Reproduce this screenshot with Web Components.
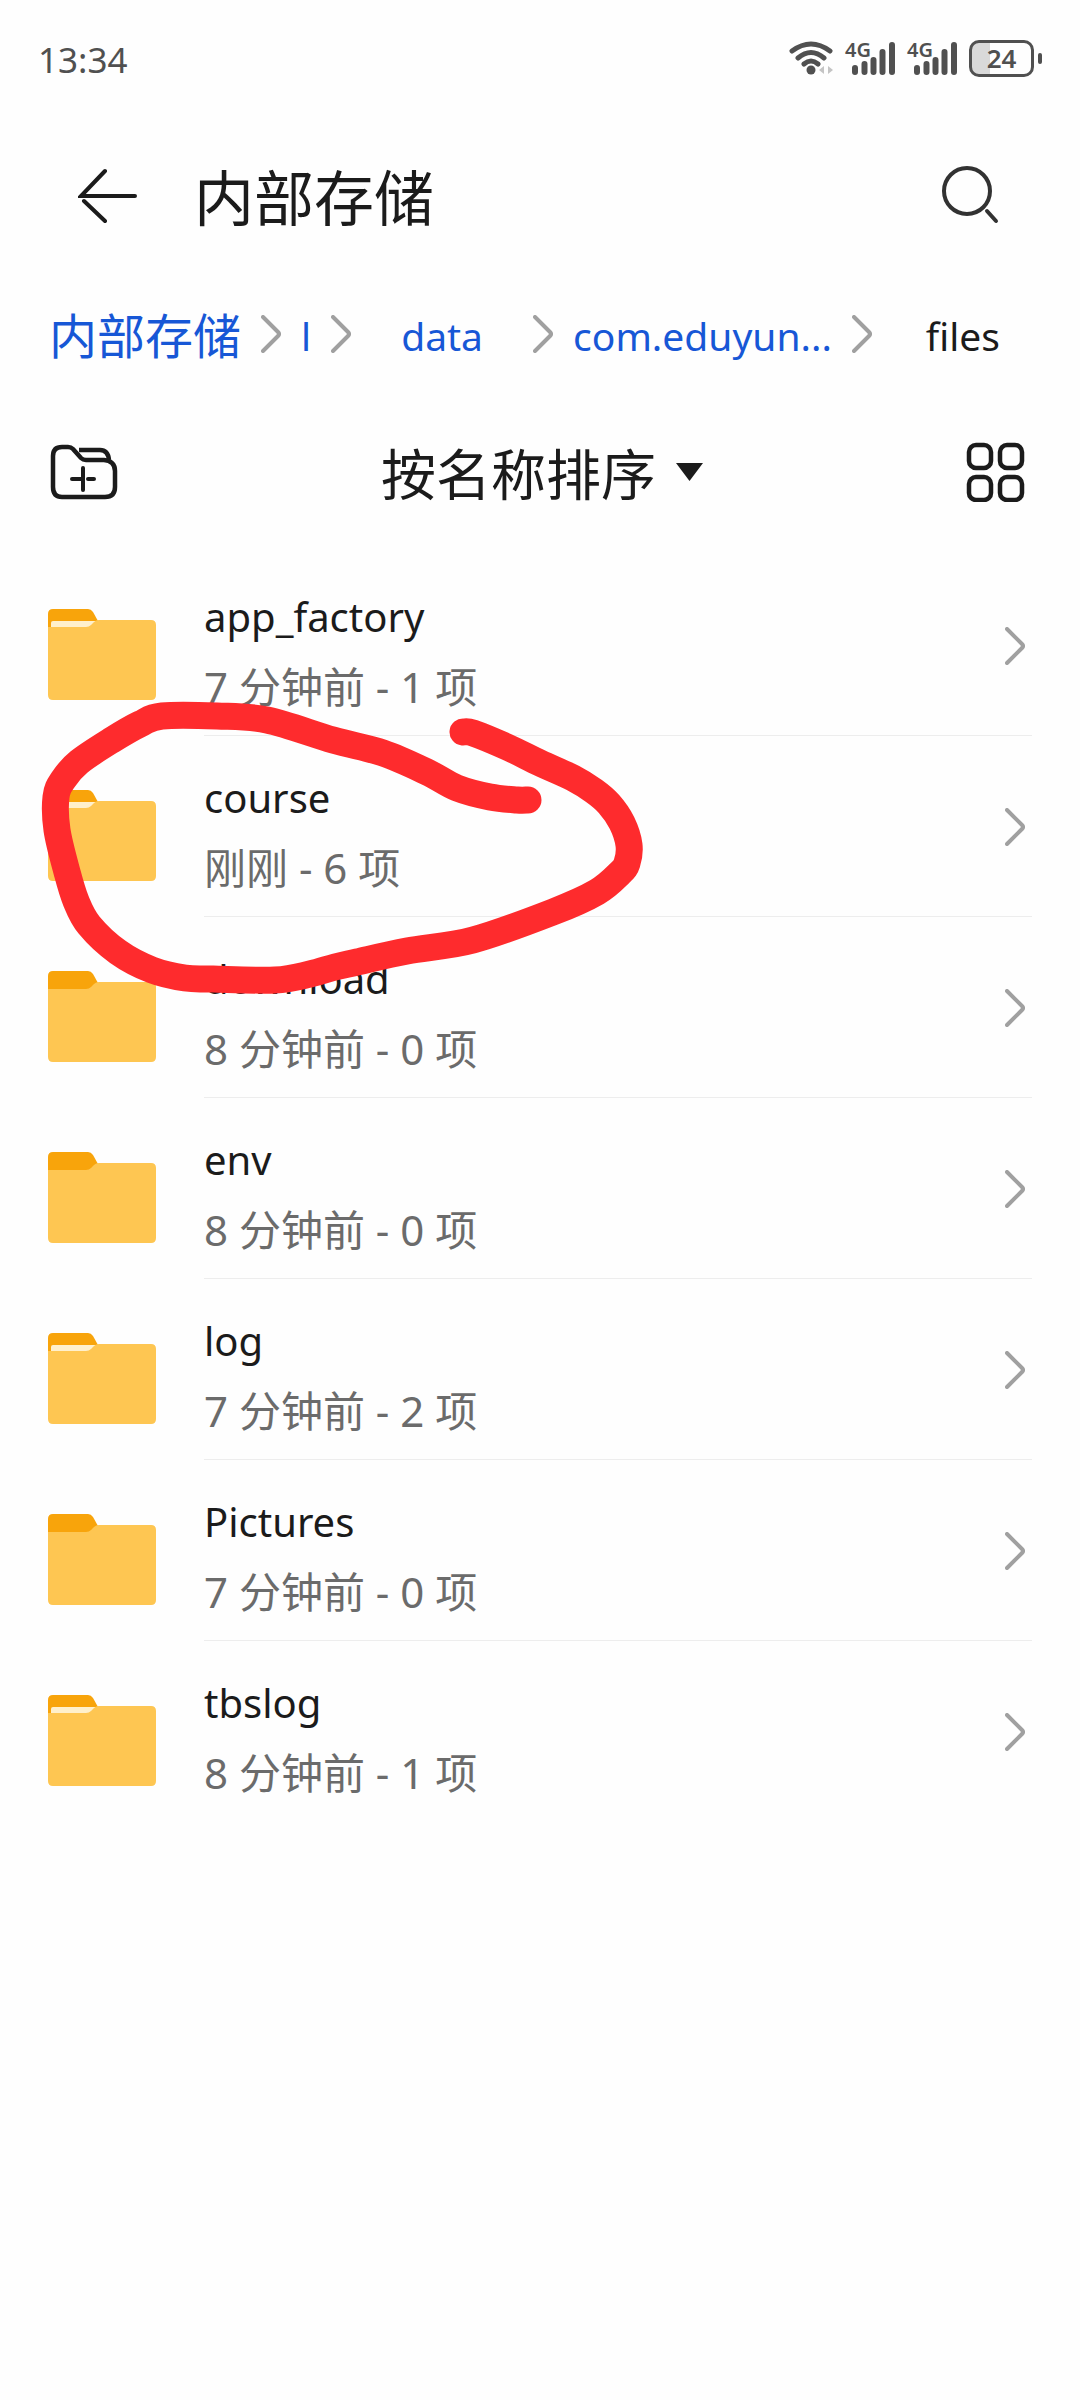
<!DOCTYPE html>
<html lang="zh-CN">
<head>
<meta charset="utf-8">
<meta name="viewport" content="width=device-width, initial-scale=1">
<title>内部存储</title>
<style>
html, body { margin: 0; }
body { background: #fefefe; color: #1b1b1b; font-family: "Noto Sans", "Noto Sans CJK SC", sans-serif; }
</style>
</head>
<body>
<file-manager></file-manager>
<script>
const define = (name, html, setup) => {
  const tpl = document.createElement('template');
  tpl.innerHTML = `<style>
    *{box-sizing:border-box}
    button,a{font:inherit;color:inherit;background:none;border:0;padding:0;margin:0;text-decoration:none;cursor:pointer}
    svg{display:block;flex:none}
  </style>` + html;
  customElements.define(name, class extends HTMLElement {
    constructor() {
      super();
      this.attachShadow({ mode: 'open' }).append(tpl.content.cloneNode(true));
    }
    connectedCallback() { if (setup) setup(this, this.shadowRoot); }
  });
};

define('chevron-icon', `
<style>:host{display:block;flex:none;color:#a0a0a0}</style>
<svg width="20" height="38" viewBox="0 0 20 38" fill="none" stroke="currentColor" stroke-width="4" stroke-linecap="round" stroke-linejoin="round" aria-hidden="true"><path d="M2 2l15 15q2 2 0 4L2 36"/></svg>`);

define('signal-icon', `
<style>
:host{display:block;position:relative;width:50px;height:34px}
span{position:absolute;left:0;top:0;font-size:20px;line-height:18px;font-weight:600}
</style>
<span>4G</span>
<svg width="50" height="34" viewBox="0 0 50 34" stroke="currentColor" stroke-width="6" stroke-linecap="round" aria-hidden="true"><path d="M10 27v4M19.500 23v8M28.500 19v12M37.500 11v20M47 4v27"/></svg>`);

define('battery-icon', `
<style>
:host{display:flex;align-items:center;gap:4px}
.body{width:65px;height:37px;border:3px solid currentColor;border-radius:10px;background:linear-gradient(90deg,#d9d9d9 18px,transparent 18px);display:flex;align-items:center;justify-content:center;font-size:26px;line-height:30px;font-weight:600}
.cap{width:4px;height:11px;border-radius:2px;background:currentColor}
</style>
<div class="body"><slot></slot></div><div class="cap"></div>`);

define('status-bar', `
<style>
:host{display:flex;align-items:center;justify-content:space-between;height:116px;padding:0 38px 0 38px;color:#505050}
time{font-size:35px;line-height:40px;padding-top:4px}
.right{display:flex;align-items:center;gap:12px}
</style>
<time>13:34</time>
<div class="right">
<svg width="44" height="34" viewBox="0 0 44 34" fill="none" stroke="currentColor" stroke-width="5" stroke-linecap="round" aria-hidden="true"><path d="M3 10Q22-4 41 10M9 17Q22 6 35 17M15 23Q22 17 29 23"/><circle cx="22" cy="29" r="4.500" fill="currentColor" stroke="none"/><path d="M35 25v8l-5-4zM39 25v8l5-4z" fill="#c4c4c4" stroke="none"/></svg>
<signal-icon></signal-icon><signal-icon></signal-icon><battery-icon>24</battery-icon>
</div>`);

define('title-bar', `
<style>
:host{display:flex;align-items:center;height:160px;padding:0 80px 0 78px}
h1{flex:1;margin:0 0 0 56px;padding-top:4px;font-size:60px;line-height:72px;font-weight:400}
.find{color:#323232}
</style>
<button aria-label="返回"><svg width="60" height="56" viewBox="0 0 60 56" fill="none" stroke="currentColor" stroke-width="4" stroke-linecap="round"><path d="M27 3L3 28H57M6 33L27 53"/></svg></button>
<h1><slot></slot></h1>
<button class="find" aria-label="搜索"><svg width="60" height="64" viewBox="0 0 60 64" fill="none" stroke="currentColor" stroke-width="4"><circle cx="27" cy="27" r="23"/><path d="M47 47L56 57" stroke-linecap="round"/></svg></button>`);

define('crumb-trail', `
<style>
:host{display:block}
nav{display:flex;align-items:center;gap:20px;height:116px;padding-left:49px;font-size:39px;line-height:56px;white-space:nowrap}
a,span{padding-top:4px}
a{color:#1757d6}
.root{font-size:48px}
.wide{min-width:142px;text-align:center}
</style>
<nav aria-label="路径">
<a class="root" href="#root">内部存储</a><chevron-icon></chevron-icon>
<a href="#l">l</a><chevron-icon></chevron-icon>
<a class="wide" href="#data">data</a><chevron-icon></chevron-icon>
<a href="#com">com.eduyun...</a><chevron-icon></chevron-icon>
<span class="wide" aria-current="page">files</span>
</nav>`);

define('sort-bar', `
<style>
:host{display:flex;align-items:center;justify-content:space-between;height:160px;margin-bottom:3px;padding:0 54px 0 50px}
.sort{display:flex;align-items:center;gap:20px;font-size:55px;line-height:72px}
.sort span{padding-top:4px}
</style>
<button aria-label="新建文件夹"><svg width="68" height="56" viewBox="0 0 68 56" fill="none" stroke="currentColor" stroke-width="4.500"><path d="M3 12Q3 3 12 3H18Q21 3 23 5L31 14Q33 16 36 16H54Q65 17 65 27V43Q65 53 55 53H12Q3 53 3 43Z"/><path d="M29 6H50Q58 6 59 16"/><path d="M33 24V46M22 35H32M38 35H44" stroke-width="4" stroke-linecap="round"/></svg></button>
<button class="sort"><span>按名称排序</span><svg width="27" height="18" viewBox="0 0 27 18" fill="currentColor" aria-hidden="true"><path d="M0 0H27L13.500 18Z"/></svg></button>
<button aria-label="网格视图"><svg width="60" height="60" viewBox="0 0 60 60" fill="none" stroke="currentColor" stroke-width="4.500"><rect x="3" y="3" width="22" height="23" rx="7"/><rect x="34" y="3" width="22" height="23" rx="7"/><rect x="3" y="35" width="22" height="23" rx="7"/><rect x="34" y="35" width="22" height="23" rx="7"/></svg></button>`);

define('folder-icon', `
<style>:host{display:block}:host([empty]) .paper{display:none}</style>
<svg width="108" height="91" viewBox="0 0 108 91" aria-hidden="true">
<path d="M0 30V5Q0 0 5 0H40Q43 0 45 3L50 12V30Z" fill="#f8a40b"/>
<path class="paper" d="M3 14Q3 12 5 12H50V24H3Z" fill="#fff0cc"/>
<path d="M0 18H38Q41 18 43 16L46 13Q48 11 51 11H103Q108 11 108 16V86Q108 91 103 91H5Q0 91 0 86Z" fill="#fec652"/>
</svg>`);

define('file-row', `
<style>
:host{display:block}
a{display:flex;padding-left:48px}
folder-icon{margin:54px 48px 0 0}
.main{flex:1;display:flex;justify-content:space-between;height:181px;margin-right:48px;padding:34px 7px 0 0;border-bottom:1px solid #ededed}
:host(:last-child) .main{border-color:transparent}
.name{font-size:40px;line-height:56px;margin-bottom:14px}
.info{font-size:42px;line-height:56px;color:#6b6b6b}
chevron-icon{margin-top:38px}
</style>
<a href="#"><folder-icon></folder-icon><div class="main"><div><div class="name"><slot></slot></div><div class="info"></div></div><chevron-icon></chevron-icon></div></a>`,
(el, root) => {
  root.querySelector('.info').textContent = el.getAttribute('info');
  root.querySelector('a').href = '#' + el.textContent;
  root.querySelector('folder-icon').toggleAttribute('empty', el.getAttribute('info').includes('- 0 '));
});

define('pen-mark', `
<style>:host{display:block;pointer-events:none}</style>
<svg width="620" height="300" viewBox="30 700 620 300" aria-hidden="true"><path fill="none" stroke="#fe2b2d" stroke-width="27" stroke-linecap="round" stroke-linejoin="round"/></svg>`,
(el, root) => {
  const p = [[463,732],[473,733],[507,747],[540,763],[573,778],[594,791],[609,804],[622,823],[629,845],[627,863],[620,873],[597,892],[553,912],[473,940],[407,951],[357,962],[335,967],[310,974],[275,980],[213,979],[185,978],[152,970],[118,952],[89,925],[76,901],[67,872],[57,830],[56,797],[63,780],[79,762],[112,740],[140,724],[162,716],[217,716],[267,720],[333,740],[383,753],[427,772],[457,788],[490,797],[517,800],[528,800]];
  let d = 'M' + p[0];
  for (let i = 0; i < p.length - 1; i++) {
    const a = p[i - 1] || p[i], b = p[i], c = p[i + 1], e = p[i + 2] || c;
    d += `C${b[0] + (c[0] - a[0]) / 6} ${b[1] + (c[1] - a[1]) / 6} ${c[0] - (e[0] - b[0]) / 6} ${c[1] - (e[1] - b[1]) / 6} ${c}`;
  }
  root.querySelector('path').setAttribute('d', d);
});

define('file-manager', `
<style>
:host{display:block}
main{position:relative}
pen-mark{position:absolute;left:30px;top:145px}
</style>
<status-bar></status-bar>
<title-bar>内部存储</title-bar>
<crumb-trail></crumb-trail>
<sort-bar></sort-bar>
<main>
<div>
<file-row info="7 分钟前 - 1 项">app_factory</file-row>
<file-row info="刚刚 - 6 项">course</file-row>
<file-row info="8 分钟前 - 0 项">download</file-row>
<file-row info="8 分钟前 - 0 项">env</file-row>
<file-row info="7 分钟前 - 2 项">log</file-row>
<file-row info="7 分钟前 - 0 项">Pictures</file-row>
<file-row info="8 分钟前 - 1 项">tbslog</file-row>
</div>
<pen-mark></pen-mark>
</main>`);
</script>
</body>
</html>
